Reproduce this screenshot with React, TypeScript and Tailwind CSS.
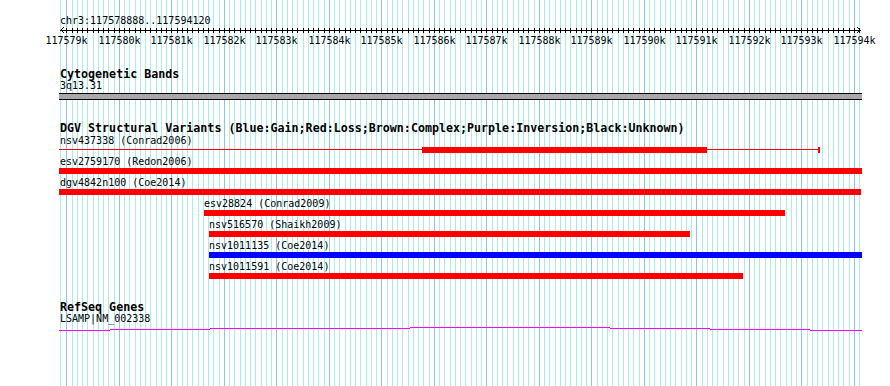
const MINOR = '#a8ecec';
const MAJOR = '#88c4ec';
const X0 = 66.3; // pixel x of 117579000
const PX_PER_BP = 0.0525;

const xAt = (bp: number) => Math.round(X0 + (bp - 117579000) * PX_PER_BP);

const minorLines = Array.from({ length: 152 }, (_, i) => 117579000 + i * 100);
const majorMarks = Array.from({ length: 16 }, (_, i) => 117579000 + i * 1000);

interface Variant {
  label: string;
  labelX: number;
  start: number;
  end: number;
  color: string;
  thin?: [number, number];
}

const variants: Variant[] = [
  { label: 'nsv437338 (Conrad2006)', labelX: 60, start: 422, end: 707, color: '#ff0000', thin: [59, 819] },
  { label: 'esv2759170 (Redon2006)', labelX: 60, start: 59, end: 862, color: '#ff0000' },
  { label: 'dgv4842n100 (Coe2014)', labelX: 60, start: 59, end: 861, color: '#ff0000' },
  { label: 'esv28824 (Conrad2009)', labelX: 204, start: 204, end: 785, color: '#ff0000' },
  { label: 'nsv516570 (Shaikh2009)', labelX: 209, start: 209, end: 690, color: '#ff0000' },
  { label: 'nsv1011135 (Coe2014)', labelX: 209, start: 209, end: 862, color: '#0000ff' },
  { label: 'nsv1011591 (Coe2014)', labelX: 209, start: 209, end: 743, color: '#ff0000' },
];

// intron line of LSAMP, drawn in 1px steps: [from, to, y inside the 10px strip]
const geneSteps: [number, number, number][] = [
  [59, 110, 6],
  [110, 210, 5],
  [210, 410, 4],
  [410, 610, 3],
  [610, 710, 4],
  [710, 810, 5],
  [810, 862, 6],
];

function Grid() {
  return (
    <svg className="absolute inset-0" width={890} height={386} shapeRendering="crispEdges">
      <rect x={60} y={0} width={1} height={386} fill={MINOR} />
      {minorLines.map((bp) => (
        <rect
          key={bp}
          x={xAt(bp)}
          y={0}
          width={1}
          height={386}
          fill={bp % 1000 === 0 ? MAJOR : MINOR}
        />
      ))}
    </svg>
  );
}

function Ruler() {
  return (
    <div className="flex flex-col">
      <div className="ml-[60px] text-[10px] leading-[10px]">chr3:117578888..117594120</div>
      <svg width={890} height={10} shapeRendering="crispEdges" className="block">
        <rect x={60} y={4} width={801} height={1} fill="#000" />
        {minorLines.map((bp) => (
          <rect key={bp} x={xAt(bp)} y={2} width={1} height={5} fill="#000" />
        ))}
        <polyline points="64,1 61,4 64,7" fill="none" stroke="#000" strokeWidth={1} />
        <polyline points="857,1 860,4 857,7" fill="none" stroke="#000" strokeWidth={1} />
      </svg>
      <div className="relative h-[10px]">
        {majorMarks.map((bp) => (
          <span
            key={bp}
            className="absolute top-0 -translate-x-1/2 text-[10px] leading-[10px] whitespace-nowrap"
            style={{ left: xAt(bp) + 0.5 }}
          >
            {bp / 1000}k
          </span>
        ))}
      </div>
    </div>
  );
}

function VariantRow({ v, first }: { v: Variant; first: boolean }) {
  return (
    <div className={first ? 'mt-[2px]' : 'mt-[4px]'}>
      <div className="text-[10px] leading-[10px] whitespace-nowrap" style={{ marginLeft: v.labelX }}>
        {v.label}
      </div>
      <div className="relative mt-[1px] h-[6px]">
        {v.thin && (
          <>
            <div
              className="absolute top-[2px] h-[1px]"
              style={{ left: v.thin[0], width: v.thin[1] - v.thin[0], background: v.color }}
            />
            <div
              className="absolute top-0 h-[6px] w-[2px]"
              style={{ left: v.thin[1] - 1, background: v.color }}
            />
          </>
        )}
        <div
          className="absolute top-0 h-[6px]"
          style={{ left: v.start, width: v.end - v.start, background: v.color }}
        />
      </div>
    </div>
  );
}

export default function App() {
  return (
    <div className="relative h-[386px] w-[890px] overflow-hidden bg-white font-['DejaVu_Sans_Mono',monospace] text-black">
      <Grid />
      <div className="relative flex flex-col pt-[16px]">
        <Ruler />

        <div className="ml-[60px] mt-[22px] text-[11.67px] font-bold leading-[12px]">Cytogenetic Bands</div>
        <div className="ml-[60px] mt-[1px] text-[10px] leading-[10px]">3q13.31</div>
        <div className="ml-[59px] mt-[2px] h-[7px] w-[803px] border-y border-black bg-[#a9a7a9]" />

        <div className="ml-[60px] mt-[22px] whitespace-nowrap text-[11.67px] font-bold leading-[12px]">
          DGV Structural Variants (Blue:Gain;Red:Loss;Brown:Complex;Purple:Inversion;Black:Unknown)
        </div>
        {variants.map((v, i) => (
          <VariantRow key={v.label} v={v} first={i === 0} />
        ))}

        <div className="ml-[60px] mt-[22px] text-[11.67px] font-bold leading-[12px]">RefSeq Genes</div>
        <div className="ml-[60px] mt-[1px] text-[10px] leading-[10px]">LSAMP|NM_002338</div>
        <svg width={890} height={10} shapeRendering="crispEdges" className="block">
          {geneSteps.map(([a, b, y]) => (
            <rect key={a} x={a} y={y} width={b - a} height={1} fill="#ff00ff" />
          ))}
        </svg>
      </div>
    </div>
  );
}
